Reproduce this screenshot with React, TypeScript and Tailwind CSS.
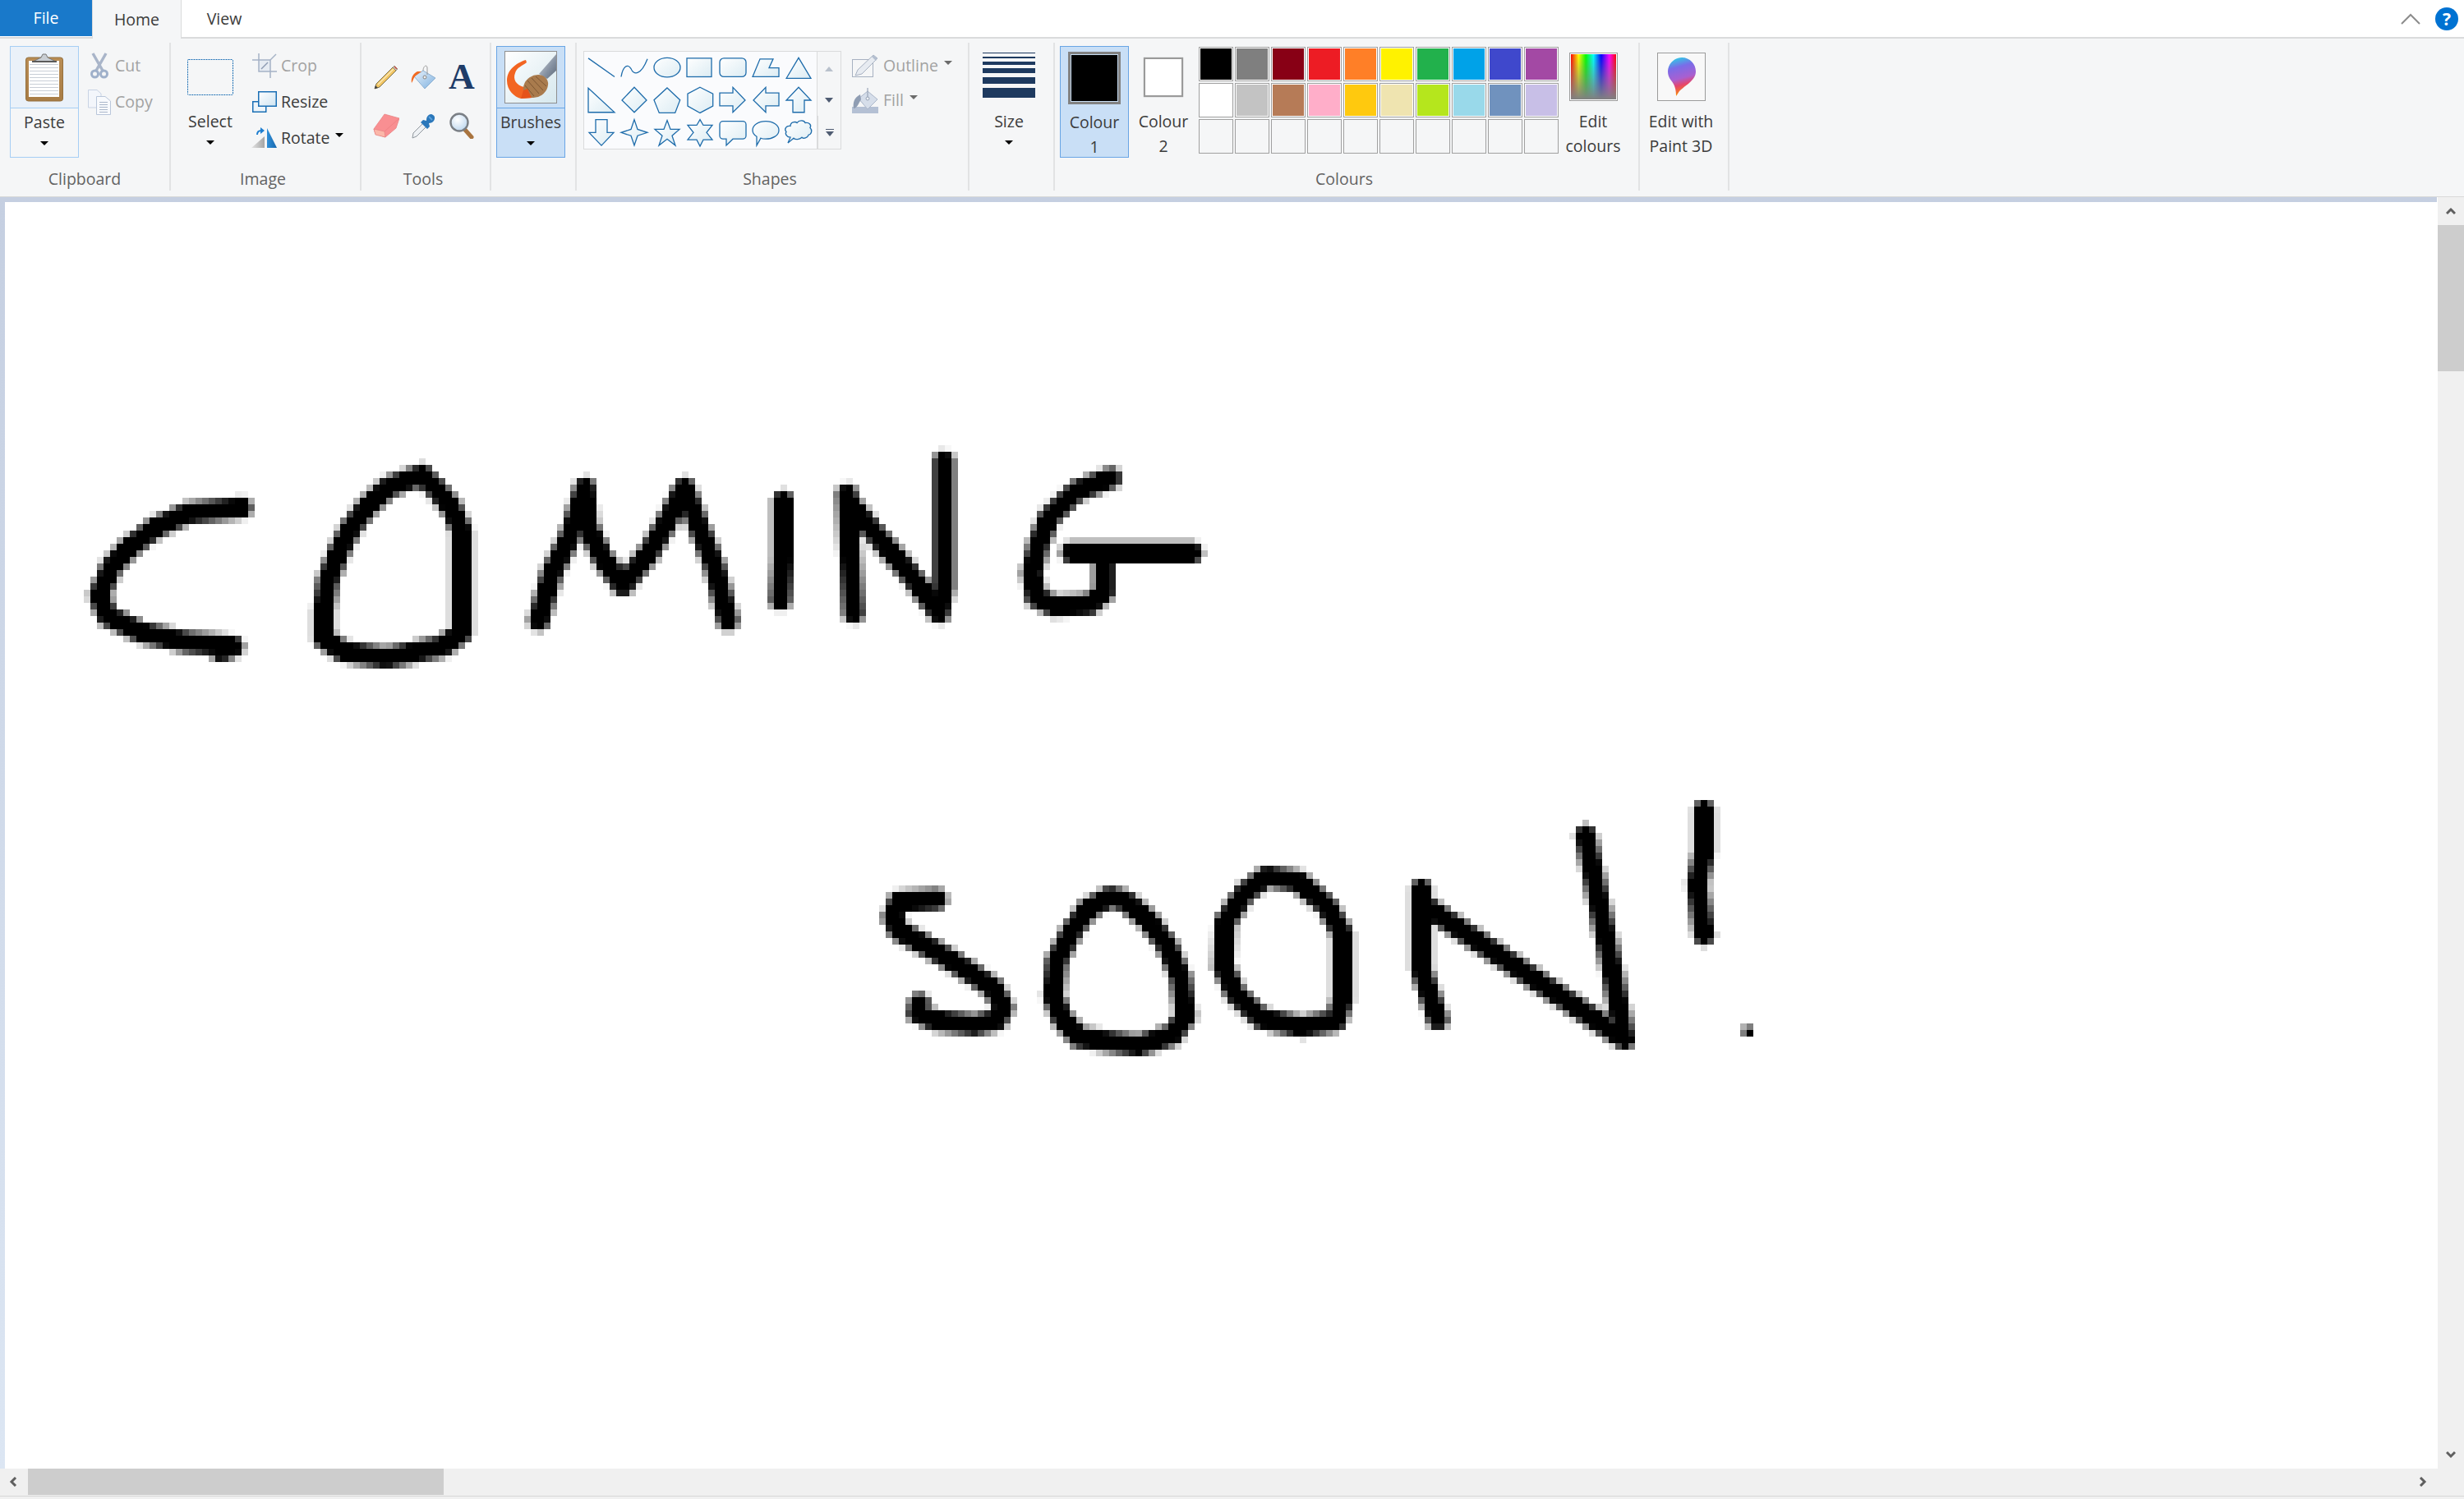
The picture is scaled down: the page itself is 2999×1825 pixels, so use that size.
import React from "react";

const strokes: number[][][] = [
  [[294,618],[228,625],[190,642],[157,667],[136,690],[121,725],[131,750],[172,770],[228,782],[284,787],[269,793]],
  [[514,578],[473,593],[447,617],[427,643],[412,673],[399,707],[394,743],[394,777],[417,793],[470,801],[539,787],[562,770],[562,647],[549,617],[529,593],[514,580]],
  [[656,755],[672,697],[694,653],[712,594],[715,640],[734,680],[758,713],[790,673],[811,637],[833,594],[849,637],[870,690],[886,755]],
  [[953,610],[953,680],[950,730]],
  [[1031,602],[1034,663],[1039,746]],
  [[1034,613],[1068,653],[1106,697],[1143,746],[1149,713],[1149,562]],
  [[1352,582],[1310,598],[1277,630],[1264,663],[1256,697],[1261,727],[1283,738],[1326,736],[1344,720],[1344,673]],
  [[1304,673],[1451,673]],
  [[1140,1095],[1094,1098],[1087,1117],[1094,1133],[1137,1157],[1175,1180],[1209,1203],[1221,1227],[1213,1242],[1186,1248],[1137,1242],[1117,1233],[1119,1222]],
  [[1351,1092],[1324,1107],[1305,1133],[1286,1170],[1282,1213],[1293,1240],[1313,1263],[1385,1273],[1427,1260],[1443,1237],[1437,1190],[1420,1150],[1397,1120],[1370,1097],[1351,1092]],
  [[1542,1067],[1515,1087],[1491,1123],[1489,1177],[1504,1210],[1535,1240],[1584,1250],[1626,1243],[1634,1217],[1634,1137],[1615,1103],[1580,1073],[1542,1067]],
  [[1730,1083],[1730,1180],[1750,1241]],
  [[1730,1100],[1977,1265],[1962,1180],[1945,1093],[1930,1017]],
  [[2074,987],[2074,1037],[2066,1077],[2074,1138]],
];

// the drawing is a zoomed bitmap, so strokes go onto an 8px grid
function rasterize() {
  const cells = new Map<string, number>();
  const r = 13;
  for (const s of strokes) {
    for (let k = 0; k < s.length - 1; k++) {
      const [ax, ay] = s[k];
      const [bx, by] = s[k + 1];
      const x0 = Math.floor((Math.min(ax, bx) - 24 - 6) / 8);
      const x1 = Math.ceil((Math.max(ax, bx) + 24 - 6) / 8);
      const y0 = Math.floor((Math.min(ay, by) - 24 - 246) / 8);
      const y1 = Math.ceil((Math.max(ay, by) + 24 - 246) / 8);
      const dx = bx - ax;
      const dy = by - ay;
      const len = dx * dx + dy * dy || 1;
      for (let i = x0; i <= x1; i++) {
        for (let j = y0; j <= y1; j++) {
          const px = 6 + i * 8 + 4;
          const py = 246 + j * 8 + 4;
          const t = Math.max(0, Math.min(1, ((px - ax) * dx + (py - ay) * dy) / len));
          const d = Math.hypot(px - ax - t * dx, py - ay - t * dy);
          const c = Math.max(0, Math.min(1, (r - d) / 8 + 0.5));
          const key = i + "," + j;
          if (c > 0.02 && c > (cells.get(key) ?? 0)) cells.set(key, c);
        }
      }
    }
  }
  cells.set("265,126", 1);
  cells.set("264,126", 0.5);
  cells.set("265,125", 0.5);
  cells.set("264,125", 0.3);
  return [...cells.entries()].map(([key, c]) => {
    const [i, j] = key.split(",").map(Number);
    return { i, j, c: Math.round(c * 100) / 100 };
  });
}

const pixels = rasterize();

const Caret = ({ color = "#000", className = "" }: { color?: string; className?: string }) => (
  <svg width="10" height="5" viewBox="0 0 10 5" className={"block " + className}>
    <path d="M0 0H10L5 5Z" fill={color} />
  </svg>
);

const LargeButton = ({
  lines,
  icon,
  caret,
  variant = "plain",
}: {
  lines: string[];
  icon: React.ReactNode;
  caret?: boolean;
  variant?: "plain" | "paste" | "active" | "selected";
}) => {
  const outer = {
    plain: "",
    paste: "border border-[#a6cef4]",
    active: "border border-[#69a5e5] bg-[#c9dff6]",
    selected: "border border-[#69a5e5] bg-[#c9dff6]",
  }[variant];
  const top = {
    plain: "",
    paste: "border-b border-[#a6cef4] bg-[#eaf1f9]",
    active: "border-b border-[#69a5e5]",
    selected: "",
  }[variant];
  return (
    <div className={"mt-[4px] flex h-[136px] w-[84px] shrink-0 flex-col items-stretch " + outer}>
      <div className={"flex h-[75px] shrink-0 items-center justify-center " + top}>{icon}</div>
      <div className="flex flex-col items-center pt-[2px] leading-[30px] text-[#3b3b3b]">
        {lines.map((l) => (
          <span key={l} className="whitespace-nowrap">{l}</span>
        ))}
        {caret && <Caret className="mt-[8px]" />}
      </div>
    </div>
  );
};

const SmallButton = ({
  icon,
  label,
  iconWidth,
  disabled,
  caret,
  height = "h-[44px]",
}: {
  icon: React.ReactNode;
  label: string;
  iconWidth: string;
  disabled?: boolean;
  caret?: boolean;
  height?: string;
}) => (
  <div className={"flex items-center " + height}>
    <div className={"flex shrink-0 items-center justify-center " + iconWidth}>{icon}</div>
    <span className={disabled ? "text-[#a2a2a2]" : "text-[#3b3b3b]"}>{label}</span>
    {caret && <Caret color={disabled ? "#6b6b6b" : "#000"} className="mb-[8px] ml-[7px]" />}
  </div>
);

const Group = ({
  label,
  width,
  children,
  labelClass = "pr-[6px]",
}: {
  label?: string;
  width: string;
  children: React.ReactNode;
  labelClass?: string;
}) => (
  <section className={"mt-[5px] flex h-[180px] shrink-0 flex-col border-r-2 border-[#e2e3e4] " + width}>
    <div className="flex h-[152px] shrink-0 items-start">{children}</div>
    <div className={"flex h-[28px] items-center justify-center text-[#636363] " + labelClass}>{label}</div>
  </section>
);

const ClipboardIcon = () => (
  <svg width="46" height="60" viewBox="0 0 46 60">
    <defs>
      <linearGradient id="board" x1="0" y1="0" x2="0" y2="1">
        <stop offset="0" stopColor="#b98d55" />
        <stop offset="1" stopColor="#a87c45" />
      </linearGradient>
    </defs>
    <rect x="0.5" y="6" width="45" height="53" rx="3" fill="url(#board)" stroke="#94703f" />
    <rect x="4" y="10" width="37" height="44" fill="#fff" />
    {[14, 18, 22, 26, 30, 34, 38, 42, 46, 50].map((y) => (
      <rect key={y} x="5" y={y} width="35" height="1" fill="#c8ced6" />
    ))}
    <path d="M9 11 L19 6 L21 2 H25 L27 6 L37 11Z" fill="#c9ced4" stroke="#777" strokeWidth="1" />
    <rect x="8" y="10" width="30" height="2" fill="#5b5b5b" />
  </svg>
);

const ScissorsIcon = () => (
  <svg width="22" height="32" viewBox="0 0 22 32" fill="none">
    <path d="M3 1 L15 22 M19 1 L7 22" stroke="#a9b5c9" strokeWidth="3.5" />
    <circle cx="5.5" cy="26" r="4" stroke="#9fb0ca" strokeWidth="3" />
    <circle cx="16.5" cy="26" r="4" stroke="#9fb0ca" strokeWidth="3" />
  </svg>
);

const CopyIcon = () => (
  <svg width="28" height="31" viewBox="0 0 28 31">
    <path d="M0.5 0.5H11L16 5V22H0.5Z" fill="#f3f6fb" stroke="#c8d3e4" />
    <path d="M10.5 8.5H21L27.5 14V30.5H10.5Z" fill="#f8fafd" stroke="#b9c6da" />
    {[15, 18, 21, 24, 27].map((y) => (
      <rect key={y} x="14" y={y} width="10" height="1" fill="#a9b6c9" />
    ))}
  </svg>
);

const SelectIcon = () => (
  <svg width="56" height="44" viewBox="0 0 56 44">
    <rect x="0.5" y="0.5" width="55" height="43" rx="1" fill="none" stroke="#1c6fb4" strokeDasharray="2 1" />
  </svg>
);

const CropIcon = () => (
  <svg width="30" height="30" viewBox="0 0 30 30" fill="none" stroke="#a5b2c6" strokeWidth="1.5">
    <rect x="8" y="8" width="14" height="14" fill="#e6ebf2" stroke="none" />
    <path d="M0 8H22V30M8 0V22H30" />
    <path d="M22 8L29 1" />
    <path d="M11 19L19 11" stroke="#8d9bb2" />
  </svg>
);

const ResizeIcon = () => (
  <svg width="30" height="26" viewBox="0 0 30 26">
    <defs>
      <linearGradient id="rs" x1="0" y1="0" x2="1" y2="1">
        <stop offset="0" stopColor="#fff" />
        <stop offset="1" stopColor="#cfe4f1" />
      </linearGradient>
    </defs>
    <rect x="0.75" y="12.75" width="16" height="12.5" fill="#eef5fa" stroke="#1a6fb5" strokeWidth="1.5" />
    <rect x="7.75" y="0.75" width="21.5" height="17.5" fill="url(#rs)" stroke="#1a6fb5" strokeWidth="1.5" />
  </svg>
);

const RotateIcon = () => (
  <svg width="32" height="26" viewBox="0 0 32 26">
    <defs>
      <linearGradient id="rg" x1="0" y1="0" x2="1" y2="0">
        <stop offset="0" stopColor="#e4e4e4" />
        <stop offset="1" stopColor="#a5a5a5" />
      </linearGradient>
      <linearGradient id="rb" x1="0" y1="0" x2="1" y2="0">
        <stop offset="0" stopColor="#2f8fd8" />
        <stop offset="1" stopColor="#1767ad" />
      </linearGradient>
    </defs>
    <path d="M0 25 L16 11 V25Z" fill="url(#rg)" />
    <path d="M19 1 L31 25 H19Z" fill="url(#rb)" />
    <path d="M7 9 C7 5 9 4 12 4" fill="none" stroke="#1f7fd0" strokeWidth="2" />
    <path d="M11 0 L16 4 L11 8Z" fill="#1f7fd0" />
  </svg>
);

const PencilIcon = () => (
  <svg width="30" height="30" viewBox="0 0 30 30">
    <path d="M1 29 L3 23 L23 3 L27 7 L7 27Z" fill="#f0c463" stroke="#7d7350" strokeWidth="1" />
    <path d="M5 24 L24 5" stroke="#fbe9b5" strokeWidth="1.5" />
    <path d="M23 3 L25 1 L29 5 L27 7Z" fill="#cfd3cf" stroke="#7d7350" strokeWidth="0.6" />
    <path d="M25 2 L28 5" stroke="#c7524b" strokeWidth="1.5" />
    <path d="M1 29 L2 25 L5 28Z" fill="#3f3f3f" />
  </svg>
);

const BucketIcon = () => (
  <svg width="32" height="32" viewBox="0 0 32 32">
    <defs>
      <linearGradient id="bk" x1="0" y1="0" x2="1" y2="1">
        <stop offset="0" stopColor="#e8f1fa" />
        <stop offset="1" stopColor="#7eb1e0" />
      </linearGradient>
    </defs>
    <path d="M4 15 L15 8 L30 17 L17 30Z" fill="url(#bk)" stroke="#8eb1d2" />
    <path d="M8 9 C2 12 0 18 1 23 C3 20 3 17 6 14 L13 9Z" fill="#f26a21" />
    <path d="M15 8 C15 2 20 0 20 5 V13" stroke="#9a9a9a" strokeWidth="1" fill="none" />
    <circle cx="17" cy="16" r="2" fill="#eee" stroke="#888" />
  </svg>
);

const EraserIcon = () => (
  <svg width="32" height="30" viewBox="0 0 32 30">
    <path d="M1 19 L14 1 L32 6 L28 18 L15 29 L3 25Z" fill="#f98f92" stroke="#e98484" strokeWidth="0.8" />
    <path d="M1 19 L14 22 L15 29 L3 26Z" fill="#fbb7a9" stroke="#e98484" strokeWidth="0.8" />
    <path d="M14 22 L32 6" stroke="#ee7f82" strokeWidth="0.8" />
  </svg>
);

const DropperIcon = () => (
  <svg width="32" height="32" viewBox="0 0 32 32">
    <path d="M2 31 L3 25 L16 12 L20 16 L7 29Z" fill="#eef1f4" stroke="#8f969d" />
    <path d="M12 12 L20 20 L23 17 L22 13 C24 13 27 12 28 10 C30 7 29 4 27 3 C25 1 22 2 20 5 C19 7 19 8 19 10 L15 9Z" fill="#2a77ba" />
    <path d="M22 5 L26 9" stroke="#5ba1db" strokeWidth="2" />
  </svg>
);

const MagnifierIcon = () => (
  <svg width="30" height="32" viewBox="0 0 30 32">
    <defs>
      <radialGradient id="gl" cx="0.4" cy="0.35" r="0.7">
        <stop offset="0" stopColor="#fff" />
        <stop offset="1" stopColor="#bcd6ee" />
      </radialGradient>
    </defs>
    <path d="M19 21 L27 30" stroke="#a9743f" strokeWidth="5" strokeLinecap="round" />
    <circle cx="12" cy="12" r="10.5" fill="url(#gl)" stroke="#7a7f85" strokeWidth="2.4" />
  </svg>
);

const BrushIcon = () => (
  <svg width="64" height="64" viewBox="0 0 64 64">
    <defs>
      <linearGradient id="bbg" x1="0" y1="0" x2="1" y2="1">
        <stop offset="0" stopColor="#ffffff" />
        <stop offset="1" stopColor="#d6e8ee" />
      </linearGradient>
      <linearGradient id="hd" x1="0" y1="0" x2="1" y2="1">
        <stop offset="0" stopColor="#d3d8df" />
        <stop offset="0.6" stopColor="#8591a1" />
        <stop offset="1" stopColor="#5e6a7a" />
      </linearGradient>
    </defs>
    <rect x="0.5" y="0.5" width="63" height="63" fill="url(#bbg)" stroke="#8f8f8f" />
    <path d="M63 4 V24 L52 34 L42 28Z" fill="url(#hd)" />
    <path d="M26 11 C16 14 3 22 3 36 C3 48 12 56 20 58 L34 57 L24 44 C14 42 10 34 13 27 C15 20 22 18 27 14Z" fill="#f26522" />
    <ellipse cx="38" cy="43" rx="16" ry="13" transform="rotate(-35 38 43)" fill="#a97b4d" />
    <path d="M28 36 L42 52 M33 33 L47 48 M38 31 L51 43 M25 42 L36 55" stroke="#7d5733" strokeWidth="1" />
    <path d="M20 58 L23 48 L28 46 L33 57Z" fill="#e5531a" />
  </svg>
);

const SizeIcon = () => (
  <svg width="64" height="56" viewBox="0 0 64 56" className="-mt-[3px]">
    <rect y="0" width="64" height="1" fill="#1e3a5f" />
    <rect y="5" width="64" height="2" fill="#1e3a5f" />
    <rect y="11" width="64" height="4" fill="#1e3a5f" />
    <rect y="19" width="64" height="6" fill="#1e3a5f" />
    <rect y="30" width="64" height="8" fill="#1e3a5f" />
    <rect y="43" width="64" height="12" fill="#1e3a5f" />
  </svg>
);

const shapeBoxes: React.ReactNode[] = [
  <path d="M4 8L36 31" />,
  <path d="M4 31C6 18 12 14 16 21C19 29 28 30 36 9" fill="none" />,
  <ellipse cx="20" cy="19.5" rx="16" ry="12" />,
  <rect x="4" y="8" width="30" height="23" />,
  <rect x="4" y="8" width="32" height="23" rx="5" />,
  <polygon points="4,31 13,9 29,9 24,20 36,20 36,31" />,
  <polygon points="5,33 20,7.5 35,33" />,
  <polygon points="4,5 4,35 36,35" />,
  <polygon points="20,4 35,20 20,35 5,20" />,
  <polygon points="20,4.7 35.7,19.7 29.7,35.7 10.3,35.7 4,19.7" />,
  <polygon points="20,4 35.7,12 35.7,27.3 20,35.7 5,27.3 5,12" />,
  <polygon points="4,11 20,11 20,4 35,20 20,35 20,27 4,27" />,
  <polygon points="36,11 20,11 20,4 5,20 20,35 20,27 36,27" />,
  <polygon points="20,4 35,20 27,20 27,35 13,35 13,20 5,20" />,
  <polygon points="13,4 27,4 27,20 35,20 20,36 5,20 13,20" />,
  <polygon points="20,4 24,16 36,20 24,24 20,36 16,24 4,20 16,16" />,
  <polygon points="20,5 24,16 35,16 26,24 30,36 20,28 10,36 14,24 5,16 16,16" />,
  <polygon points="20,4 24,11 35,11 28,20 35,29 24,29 20,37 16,29 5,29 12,20 5,11 16,11" />,
  <path d="M8 6H32a4 4 0 0 1 4 4V24a4 4 0 0 1 -4 4H20L12 36V28H8a4 4 0 0 1 -4 -4V10a4 4 0 0 1 4 -4Z" />,
  <path d="M20 6C29 6 36 11 36 17C36 24 28 28 20 28C18 28 16 28 14 27L9 36L9 25C6 23 4 20 4 17C4 11 11 6 20 6Z" />,
  <path d="M10 12C10 7 16 6 18 8C21 4 27 5 28 8C33 7 36 11 34 14C37 17 36 22 32 23C31 27 26 28 24 26C21 29 16 29 14 27L7 33L10 26C6 26 3 22 5 19C2 16 5 11 10 12Z" />,
];

const ShapeGallery = () => (
  <svg width="280" height="118" viewBox="0 0 280 120" preserveAspectRatio="none" className="ml-[1px] block">
    <defs>
      <linearGradient id="sf" x1="0" y1="0" x2="1" y2="1">
        <stop offset="0" stopColor="#ffffff" />
        <stop offset="1" stopColor="#dcecf3" />
      </linearGradient>
    </defs>
    {shapeBoxes.map((s, i) => (
      <g
        key={i}
        transform={`translate(${(i % 7) * 40} ${Math.floor(i / 7) * 40})`}
        fill="url(#sf)"
        stroke="#1e6cab"
        strokeWidth="1.3"
      >
        {s}
      </g>
    ))}
  </svg>
);

const OutlineIcon = () => (
  <svg width="32" height="28" viewBox="0 0 32 28" fill="none">
    <rect x="0.5" y="6.5" width="25" height="21" stroke="#a7b1c1" />
    <path d="M4 26 L7 19 L26 1 L31 5 L12 24Z" fill="#e7ebf1" stroke="#a7b1c1" />
    <path d="M26 1 L31 5 L29 8 L24 3Z" fill="#b4bfd0" />
  </svg>
);

const FillIcon = () => (
  <svg width="32" height="32" viewBox="0 0 32 32">
    <rect x="0" y="24" width="32" height="8" fill="#b4c0d4" />
    <path d="M8 14 L19 5 L31 15 L19 27Z" fill="#d6deea" stroke="#aab6c9" />
    <path d="M10 9 C2 13 1 20 2 26 C6 26 8 20 11 15Z" fill="#8f9db3" />
    <path d="M19 1 V14" stroke="#9aa5b7" strokeWidth="1.2" />
    <circle cx="19" cy="14" r="2" fill="#eef1f5" stroke="#98a4b7" />
  </svg>
);

const RainbowIcon = () => (
  <svg width="59" height="59" viewBox="0 0 59 59" className="-mt-[1px]">
    <defs>
      <linearGradient id="hue" x1="0" y1="0" x2="1" y2="0">
        <stop offset="0" stopColor="#ff0000" />
        <stop offset="0.17" stopColor="#ffff00" />
        <stop offset="0.33" stopColor="#00ff00" />
        <stop offset="0.5" stopColor="#00ffff" />
        <stop offset="0.67" stopColor="#0000ff" />
        <stop offset="0.85" stopColor="#ff00ff" />
        <stop offset="1" stopColor="#ff0000" />
      </linearGradient>
      <linearGradient id="grayv" x1="0" y1="0" x2="0" y2="1">
        <stop offset="0" stopColor="#808080" stopOpacity="0" />
        <stop offset="1" stopColor="#808080" stopOpacity="1" />
      </linearGradient>
    </defs>
    <rect x="0.5" y="0.5" width="58" height="58" fill="#fff" stroke="#9b9b9b" />
    <rect x="2" y="2" width="55" height="55" fill="url(#hue)" />
    <rect x="2" y="2" width="55" height="55" fill="url(#grayv)" />
  </svg>
);

const Paint3DIcon = () => (
  <svg width="59" height="59" viewBox="0 0 59 59" className="-mt-[1px]">
    <defs>
      <linearGradient id="drop" x1="0.3" y1="0" x2="0.5" y2="1">
        <stop offset="0" stopColor="#2dcde6" />
        <stop offset="0.25" stopColor="#7a6ce8" />
        <stop offset="0.55" stopColor="#a95fd0" />
        <stop offset="0.72" stopColor="#e6456b" />
        <stop offset="0.9" stopColor="#f47b20" />
        <stop offset="1" stopColor="#f9b000" />
      </linearGradient>
    </defs>
    <rect x="0.5" y="0.5" width="58" height="58" fill="#f8f8f8" stroke="#9b9b9b" />
    <path
      d="M30 6C40 6 47 14 47 23C47 34 34 40 27 47C25 50 24 52 23 53C23 46 22 40 17 34C14 30 13 27 13 23C13 14 21 6 30 6Z"
      fill="url(#drop)"
    />
  </svg>
);

const palette = [
  ["#000000", "#7f7f7f", "#880015", "#ed1c24", "#ff7f27", "#fff200", "#22b14c", "#00a2e8", "#3f48cc", "#a349a4"],
  ["#ffffff", "#c3c3c3", "#b67b57", "#ffaec9", "#ffc90e", "#efe4b0", "#b5e61d", "#99d9ea", "#7092be", "#c8bfe7"],
];

const Chevron = ({ d }: { d: string }) => (
  <svg width="12" height="12" viewBox="0 0 12 12" fill="none">
    <path d={d} stroke="#5f5f5f" strokeWidth="3" />
  </svg>
);

const Ribbon = () => (
  <div className="flex h-[193px] shrink-0 items-start border-b border-[#d9d9d9] bg-[#f5f6f7]">
    <Group label="Clipboard" width="w-[208px]" labelClass="pr-0">
      <div className="ml-[12px]">
        <LargeButton lines={["Paste"]} icon={<ClipboardIcon />} caret variant="paste" />
      </div>
      <div className="ml-[6px] pt-[6px]">
        <SmallButton icon={<ScissorsIcon />} label="Cut" iconWidth="w-[38px]" disabled />
        <SmallButton icon={<CopyIcon />} label="Copy" iconWidth="w-[38px]" disabled />
      </div>
    </Group>
    <Group label="Image" width="w-[232px]">
      <div className="ml-[6px]">
        <LargeButton lines={["Select"]} icon={<SelectIcon />} caret />
      </div>
      <div className="ml-[4px] pt-[6px]">
        <SmallButton icon={<CropIcon />} label="Crop" iconWidth="w-[40px]" disabled />
        <SmallButton icon={<ResizeIcon />} label="Resize" iconWidth="w-[40px]" />
        <SmallButton icon={<RotateIcon />} label="Rotate" iconWidth="w-[40px]" caret />
      </div>
    </Group>
    <Group label="Tools" width="w-[158px]">
      <div className="ml-[7px] grid grid-cols-[repeat(3,46px)] grid-rows-[repeat(2,59px)] place-items-center pt-[12px]">
        <PencilIcon />
        <BucketIcon />
        <span className="font-['Liberation_Serif',serif] text-[44px] leading-none font-bold text-[#1f3c68]">A</span>
        <EraserIcon />
        <DropperIcon />
        <MagnifierIcon />
      </div>
    </Group>
    <Group width="w-[104px]">
      <div className="ml-[6px]">
        <LargeButton lines={["Brushes"]} icon={<BrushIcon />} caret variant="active" />
      </div>
    </Group>
    <Group label="Shapes" width="w-[478px]">
      <div className="mt-[10px] ml-[8px] flex h-[120px]">
        <div className="h-full w-[285px] border border-[#dadbdc] bg-[#fafbfd]">
          <ShapeGallery />
        </div>
        <div className="flex h-full w-[29px] flex-col border-y border-r border-[#dadbdc]">
          <div className="flex h-[39px] items-center justify-center pt-[2px]">
            <svg width="10" height="6" viewBox="0 0 10 6"><path d="M0 6H10L5 0Z" fill="#b9c1cc" /></svg>
          </div>
          <div className="flex h-[39px] items-center justify-center">
            <svg width="10" height="6" viewBox="0 0 10 6"><path d="M0 0H10L5 6Z" fill="#4f5c72" /></svg>
          </div>
          <div className="flex flex-1 flex-col items-center justify-center gap-[2px] border-l border-[#dadbdc]">
            <div className="h-[1px] w-[10px] bg-[#4f5c72]" />
            <svg width="10" height="6" viewBox="0 0 10 6"><path d="M0 0H10L5 6Z" fill="#4f5c72" /></svg>
          </div>
        </div>
      </div>
      <div className="ml-[7px] pt-[7px]">
        <SmallButton icon={<OutlineIcon />} label="Outline" iconWidth="w-[44px]" height="h-[42px]" disabled caret />
        <SmallButton icon={<FillIcon />} label="Fill" iconWidth="w-[44px]" height="h-[42px]" disabled caret />
      </div>
    </Group>
    <Group width="w-[104px]">
      <div className="ml-[6px]">
        <LargeButton lines={["Size"]} icon={<SizeIcon />} caret />
      </div>
    </Group>
    <Group label="Colours" width="w-[712px]">
      <div className="ml-[6px]">
        <LargeButton
          lines={["Colour", "1"]}
          variant="selected"
          icon={
            <div className="h-[64px] w-[64px] border-[3px] border-[#828282] p-[1px]">
              <div className="h-full w-full bg-black" />
            </div>
          }
        />
      </div>
      <LargeButton
        lines={["Colour", "2"]}
        icon={<div className="h-[48px] w-[48px] border-2 border-[#9a9a9a] bg-white shadow-[0_0_1px_#999]" />}
      />
      <div className="mt-[5px] ml-[1px] grid grid-cols-[repeat(10,42px)] grid-rows-[repeat(3,42px)] gap-[2px]">
        {palette.flat().map((c) => (
          <div key={c} className="border border-[#a0a0a0] bg-white p-[1px]">
            <div className="h-full w-full" style={{ backgroundColor: c }} />
          </div>
        ))}
        {Array.from({ length: 10 }).map((_, i) => (
          <div key={i} className="border border-[#a0a0a0]" />
        ))}
      </div>
      <LargeButton lines={["Edit", "colours"]} icon={<RainbowIcon />} />
    </Group>
    <Group width="w-[109px]">
      <div className="ml-[8px]">
        <LargeButton lines={["Edit with", "Paint 3D"]} icon={<Paint3DIcon />} />
      </div>
    </Group>
  </div>
);

export default function App() {
  return (
    <div className="flex h-screen w-screen flex-col overflow-hidden bg-white font-['Open_Sans',sans-serif] text-[19.5px] leading-[28px]">
      <header className="flex h-[47px] shrink-0 items-stretch border-b-2 border-[#dadbdc] bg-white">
        <div className="mb-[1px] flex w-[112px] items-center justify-center bg-[#1979ca] text-white">File</div>
        <div className="relative z-10 -mb-[2px] flex w-[109px] items-center justify-center border-x border-[#dadbdc] bg-[#f5f6f7] text-[#3b3b3b]">
          Home
        </div>
        <div className="flex w-[104px] items-center justify-center text-[#3b3b3b]">View</div>
        <div className="ml-auto flex items-center gap-[18px] pr-[7px]">
          <svg width="24" height="14" viewBox="0 0 24 14" fill="none">
            <path d="M1 13L12 2L23 13" stroke="#8c8c8c" strokeWidth="2" />
          </svg>
          <div className="flex h-[28px] w-[28px] items-center justify-center rounded-full bg-[#0072d2] text-[21px] font-bold text-white">
            ?
          </div>
        </div>
      </header>
      <Ribbon />
      <main className="flex min-h-0 flex-1">
        <div className="min-w-0 flex-1 bg-linear-to-b from-[#c5cfe1] to-[#dce6f3] pt-[6px] pl-[6px]">
          <div className="h-full w-full bg-white">
            <svg width="2961" height="1541" viewBox="0 0 2961 1541" shapeRendering="crispEdges" className="block">
              {pixels.map((p) => (
                <rect key={p.i + "-" + p.j} x={p.i * 8} y={p.j * 8} width="8" height="8" fill="#000" fillOpacity={p.c} />
              ))}
            </svg>
          </div>
        </div>
        <div className="ml-[1px] flex w-[32px] shrink-0 flex-col bg-[#f0f0f0]">
          <div className="flex h-[34px] items-center justify-center">
            <Chevron d="M1 9L6 4L11 9" />
          </div>
          <div className="h-[178px] bg-[#cdcdcd]" />
          <div className="flex-1" />
          <div className="flex h-[34px] items-center justify-center">
            <Chevron d="M1 3L6 8L11 3" />
          </div>
        </div>
      </main>
      <div className="flex h-[33px] shrink-0 bg-[#f0f0f0]">
        <div className="flex h-[32px] w-[34px] items-center justify-center">
          <Chevron d="M8 1L3 6L8 11" />
        </div>
        <div className="h-[32px] w-[506px] bg-[#cdcdcd]" />
        <div className="flex-1" />
        <div className="mr-[34px] flex h-[32px] w-[34px] items-center justify-center">
          <Chevron d="M4 1L9 6L4 11" />
        </div>
      </div>
      <div className="h-[4px] shrink-0 border-t border-[#d6d6d6] bg-[#f0f0f0]" />
    </div>
  );
}
